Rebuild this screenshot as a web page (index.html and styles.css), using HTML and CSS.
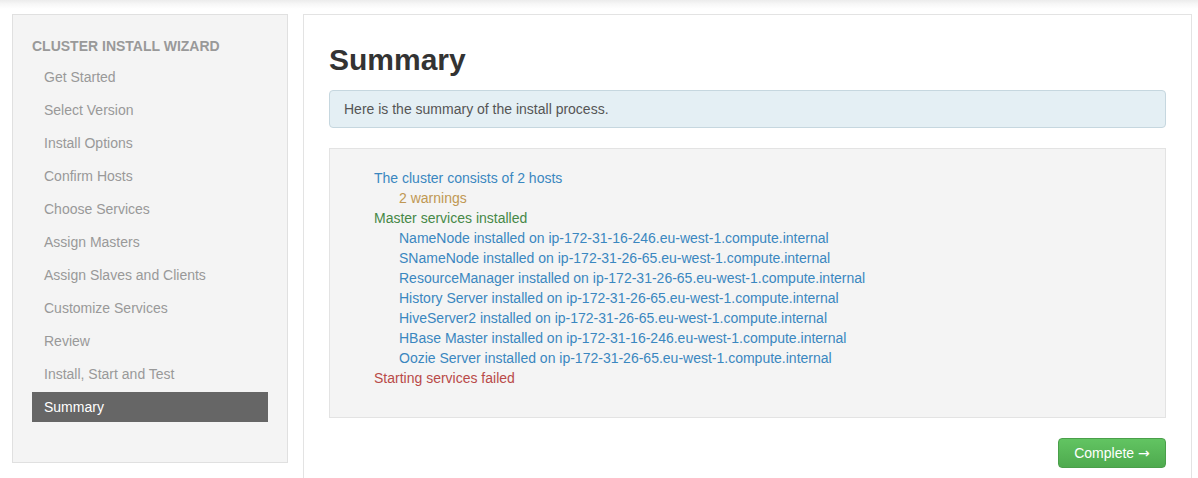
FILE: index.html
```html
<!DOCTYPE html>
<html>
<head>
<meta charset="utf-8">
<link rel="stylesheet" href="styles.css">
</head>
<body>
<div class="page">
  <div class="sidebar">
    <div class="nav-title">CLUSTER INSTALL WIZARD</div>
    <div class="nav-item">Get Started</div>
    <div class="nav-item">Select Version</div>
    <div class="nav-item">Install Options</div>
    <div class="nav-item">Confirm Hosts</div>
    <div class="nav-item">Choose Services</div>
    <div class="nav-item">Assign Masters</div>
    <div class="nav-item">Assign Slaves and Clients</div>
    <div class="nav-item">Customize Services</div>
    <div class="nav-item">Review</div>
    <div class="nav-item">Install, Start and Test</div>
    <div class="nav-item active">Summary</div>
  </div>
  <div class="main">
    <h2 class="title">Summary</h2>
    <div class="alert">Here is the summary of the install process.</div>
    <div class="well">
      <div class="line info">The cluster consists of 2 hosts</div>
      <div class="line sub warn">2 warnings</div>
      <div class="line ok">Master services installed</div>
      <div class="line sub info">NameNode installed on ip-172-31-16-246.eu-west-1.compute.internal</div>
      <div class="line sub info">SNameNode installed on ip-172-31-26-65.eu-west-1.compute.internal</div>
      <div class="line sub info">ResourceManager installed on ip-172-31-26-65.eu-west-1.compute.internal</div>
      <div class="line sub info">History Server installed on ip-172-31-26-65.eu-west-1.compute.internal</div>
      <div class="line sub info">HiveServer2 installed on ip-172-31-26-65.eu-west-1.compute.internal</div>
      <div class="line sub info">HBase Master installed on ip-172-31-16-246.eu-west-1.compute.internal</div>
      <div class="line sub info">Oozie Server installed on ip-172-31-26-65.eu-west-1.compute.internal</div>
      <div class="line err">Starting services failed</div>
    </div>
    <div class="actions">
      <button class="btn-success">Complete <span class="arrow">&rarr;</span></button>
    </div>
  </div>
</div>
</body>
</html>
```
FILE: styles.css
```css
html, body {
  margin: 0;
  padding: 0;
  background: #fff;
  font-family: "Liberation Sans", Arial, sans-serif;
  font-size: 14px;
  overflow: hidden;
}
.page {
  display: flex;
  align-items: flex-start;
  gap: 15px;
  padding: 14px 6px 0 12px;
  height: 478px;
  box-sizing: border-box;
  background: linear-gradient(to bottom, #ececec 0, #f7f7f7 4px, #fff 9px);
}
.sidebar {
  width: 276px;
  height: 449px;
  box-sizing: border-box;
  flex-shrink: 0;
  background: #f4f4f4;
  border: 1px solid #e0e0e0;
  padding: 21px 19px 0 19px;
}
.nav-title {
  font-weight: bold;
  color: #999;
  line-height: 20px;
  margin-bottom: 6px;
}
.nav-item {
  height: 30px;
  line-height: 30px;
  margin-top: 3px;
  padding-left: 12px;
  color: #999;
}
.nav-item.active {
  background: #666;
  color: #fff;
}
.main {
  flex: 1;
  height: 464px;
  box-sizing: border-box;
  background: #fff;
  border: 1px solid #e3e3e3;
  border-bottom: none;
  padding: 27px 25px 0 25px;
}
.title {
  margin: 0 0 12px 0;
  font-size: 30px;
  line-height: 36px;
  font-weight: bold;
  color: #333;
}
.alert {
  background: #e4eff4;
  border: 1px solid #c6d7df;
  border-radius: 4px;
  padding: 9px 14px;
  line-height: 18px;
  color: #555;
}
.well {
  margin-top: 20px;
  background: #f4f4f4;
  border: 1px solid #e3e3e3;
  height: 270px;
  box-sizing: border-box;
  padding: 19px 44px 0 44px;
}
.line {
  line-height: 20px;
}
.line.sub {
  padding-left: 25px;
}
.info { color: #3a87c0; }
.warn { color: #c09853; }
.ok { color: #468847; }
.err { color: #b94a48; }
.actions {
  display: flex;
  justify-content: flex-end;
  margin-top: 20px;
}
.btn-success {
  width: 108px;
  height: 30px;
  border: 1px solid #4a9f4a;
  border-radius: 4px;
  background: linear-gradient(to bottom, #62c462, #4eaa4e);
  color: #fff;
  font-family: "Liberation Sans", Arial, sans-serif;
  font-size: 14px;
  padding: 0;
}
.arrow {
  font-family: "DejaVu Sans", sans-serif;
  font-size: 14px;
}
```
